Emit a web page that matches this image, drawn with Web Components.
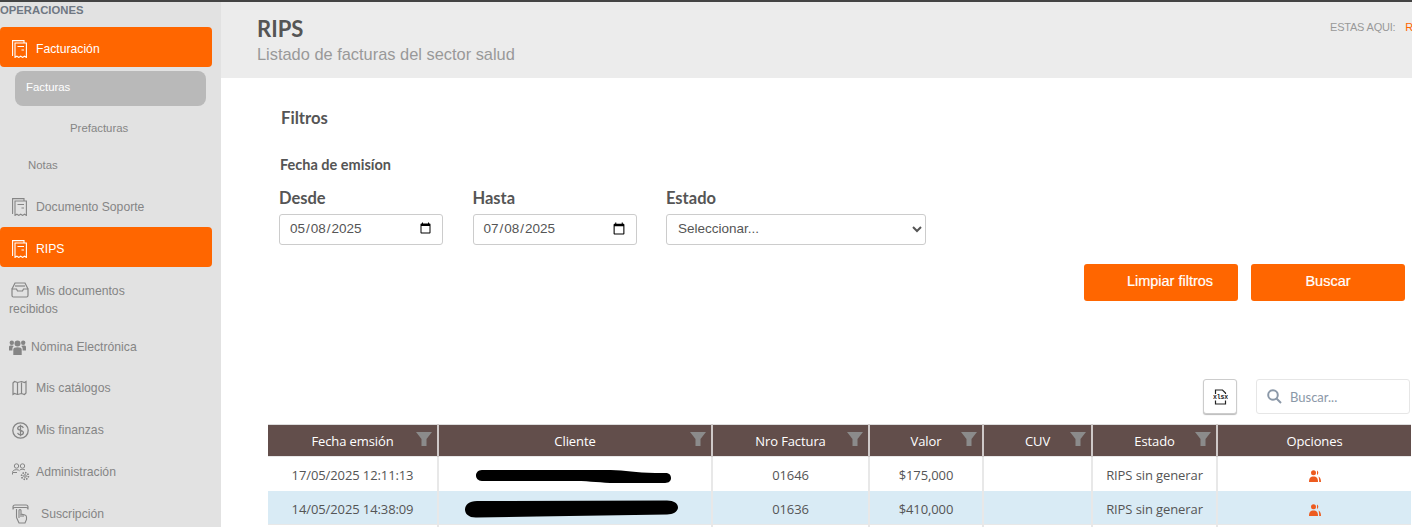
<!DOCTYPE html>
<html lang="es">
<head>
<meta charset="utf-8">
<title>RIPS</title>
<style>
  html, body { margin: 0; height: 100%; overflow: hidden; background: #fff; }
  body { font-family: "Liberation Sans", Arial, sans-serif; }
  app-shell { height: 527px; }
</style>
</head>
<body>
<app-shell>
  <side-nav slot="side"></side-nav>
  <page-header slot="main" title="RIPS" subtitle="Listado de facturas del sector salud"></page-header>
  <filter-panel slot="main"></filter-panel>
  <invoice-table slot="main"></invoice-table>
</app-shell>

<script>
const icons = {
  receipt: `<svg width="15" height="18" viewBox="0 0 15 18" fill="none" stroke="currentColor" stroke-width="1.100"><path d="M1 15.500H.6V.6h11.400V3"/><path d="M3 3h11.400v14.400l-1.900-1.200-1.900 1.200-1.900-1.200-1.900 1.200-1.900-1.200L3 17.400z"/><path d="M5.500 6.500h6.500M9.500 10h2.500"/></svg>`,
  inbox: `<svg width="18" height="16" viewBox="0 0 18 16" fill="none" stroke="currentColor" stroke-width="1.200"><path d="M1 7l3-6h10l3 6"/><path d="M4 4h10"/><path d="M1 7h4.500l1 2h5l1-2H17v6.500a1.500 1.500 0 0 1-1.500 1.500h-13A1.500 1.500 0 0 1 1 13.500z"/></svg>`,
  users: `<svg width="17" height="15" viewBox="0 0 17 15" fill="currentColor"><circle cx="8.500" cy="3.600" r="3"/><circle cx="2.800" cy="2.800" r="2.200"/><circle cx="14.200" cy="2.800" r="2.200"/><path d="M4.300 9.500c0-1.500 1.400-2.300 4.200-2.300s4.200.8 4.200 2.300V15H4.300z"/><path d="M0 6.800C0 5.800 1 5.400 2.800 5.400c1 0 1.700.2 2.100.6-1 .6-1.500 1.500-1.500 3v1.600H0zM17 6.800c0-1-1-1.400-2.800-1.400-1 0-1.700.2-2.100.6 1 .6 1.500 1.500 1.500 3v1.600H17z"/></svg>`,
  map: `<svg width="15" height="16" viewBox="0 0 15 16" fill="none" stroke="currentColor" stroke-width="1.200"><path d="M1 3l1.500-1.500 3 1 4-1 3 1L14 1.500V13l-1.500 1.500-3-1-4 1-3-1L1 14.500z"/><path d="M5.500 2.500v12M9.500 2.500v11"/></svg>`,
  dollar: `<svg width="17" height="17" viewBox="0 0 17 17" fill="none" stroke="currentColor" stroke-width="1.300"><circle cx="8.500" cy="8.500" r="7.700"/><path d="M11.300 6c-.3-1.200-1.400-1.800-2.800-1.800-1.600 0-2.800.8-2.800 2.100 0 2.800 5.700 1.500 5.700 4.300 0 1.300-1.200 2.200-2.900 2.200-1.500 0-2.600-.7-2.900-1.900M8.500 2.800v11.400"/></svg>`,
  admin: `<svg width="18" height="18" viewBox="0 0 18 18" fill="none" stroke="currentColor" stroke-width="1"><circle cx="4.500" cy="3" r="2.200"/><circle cx="10.500" cy="3" r="2.200"/><path d="M.5 11.500V9.500c0-1.800 1.500-2.800 4-2.800 1.500 0 2.500.4 3.100 1.100M1 9.500h4M8 6.800c.7-.3 1.500-.4 2.500-.4 1 0 1.800.1 2.500.5"/><circle cx="13" cy="13" r="1.300"/><circle cx="13" cy="13" r="3.400" stroke-width="1.700" stroke-dasharray="1.500 1.100"/></svg>`,
  hand: `<svg width="17" height="20" viewBox="0 0 17 20" fill="none" stroke="currentColor" stroke-width="1.100"><path d="M1 5.500V3c0-1.500 1-2 2-2h11c1 0 2 .5 2 2v2.500c0-1.500-1-2-2-2H3c-1 0-2 .5-2 2z"/><path d="M4.500 5v8.500M7 14V6.500a1 1 0 0 1 2 0V10l4 1c1 .3 1.500 1 1.500 2v2.500L13 19H7l-2.500-5.500"/><path d="M11 10.500V13M9 10v3"/></svg>`
};

class AppShell extends HTMLElement {
  connectedCallback() {
    this.attachShadow({ mode: 'open' });
    this.shadowRoot.innerHTML = `
      <style>
        :host { display: grid; grid-template-columns: 221px 1fr; border-top: 2px solid #444; box-sizing: border-box; overflow: hidden; }
        .side { background: #e2e2e2; min-height: 0; overflow: hidden; }
        .main { min-width: 0; overflow: hidden; }
      </style>
      <div class="side"><slot name="side"></slot></div>
      <div class="main"><slot name="main"></slot></div>
    `;
  }
}

class NavItem extends HTMLElement {
  connectedCallback() {
    this.attachShadow({ mode: 'open' });
    const icon = this.getAttribute('icon');
    this.shadowRoot.innerHTML = `
      <style>
        :host { display: flex; align-items: center; box-sizing: border-box; width: 212px; height: 40px; padding-left: var(--left, 12px);
          color: #858585; font-size: 12.200px; border-radius: 4px; }
        :host([active]) { background: #ff6600; color: #fff; padding-top: 3px; }
        .ico { display: flex; width: var(--ico, 24px); flex: none; }
      </style>
      ${icon ? `<span class="ico">${icons[icon]}</span>` : ''}
      <span><slot></slot></span>
    `;
  }
}

class SideNav extends HTMLElement {
  connectedCallback() {
    this.attachShadow({ mode: 'open' });
    this.shadowRoot.innerHTML = `
      <style>
        :host { display: block; }
        .title { height: 25px; line-height: 17px; font-size: 11.300px; font-weight: 700; color: #6f7782; }
        .sub { display: block; height: 35px; line-height: 32px; font-size: 11.400px; color: #858585; }
        .pill { margin: 4px 15px 0; width: 191px; background: #b9b9b9; color: #fff; border-radius: 8px; padding-left: 11px; box-sizing: border-box; }
        .pre { margin-top: 6px; padding-left: 70px; }
        .notas { margin-top: 2px; padding-left: 28px; }
        .two { padding-left: 11px; margin-top: 15px; line-height: 18px; font-size: 12.200px; color: #858585; }
        .two svg { vertical-align: -3px; margin-right: 7px; }
        .two span { margin-left: -2px; }
        .doc { margin-top: 3px; }
        .nom { margin-top: 9px; --left: 9px; --ico: 22px; }
        .cat { margin-top: 1px; }
        .fin { margin-top: 2px; }
        .adm { margin-top: 2px; }
        .sus { margin-top: 2px; --ico: 29px; }
      </style>
      <div class="title">OPERACIONES</div>
      <nav-item active icon="receipt">Facturación</nav-item>
      <div class="sub pill">Facturas</div>
      <div class="sub pre">Prefacturas</div>
      <div class="sub notas">Notas</div>
      <nav-item class="doc" icon="receipt">Documento Soporte</nav-item>
      <nav-item active icon="receipt">RIPS</nav-item>
      <div class="two">${icons.inbox}Mis documentos<br><span>recibidos</span></div>
      <nav-item class="nom" icon="users">Nómina Electrónica</nav-item>
      <nav-item class="cat" icon="map">Mis catálogos</nav-item>
      <nav-item class="fin" icon="dollar">Mis finanzas</nav-item>
      <nav-item class="adm" icon="admin">Administración</nav-item>
      <nav-item class="sus" icon="hand">Suscripción</nav-item>
    `;
  }
}

class PageHeader extends HTMLElement {
  connectedCallback() {
    this.attachShadow({ mode: 'open' });
    this.shadowRoot.innerHTML = `
      <style>
        :host { display: flex; justify-content: space-between; box-sizing: border-box; height: 76px; background: #ececec; padding: 13px 0 0 36px; overflow: hidden; }
        h1 { margin: 0; font: 700 22px/27px Lato, sans-serif; color: #555; }
        p { margin: 0; font-size: 16.400px; line-height: 24px; color: #999; }
        .crumb { white-space: nowrap; font-size: 11px; letter-spacing: -.2px; color: #999; margin: 6px -4px 0 0; width: 86px; overflow: hidden; }
        .crumb b { font-weight: 400; color: #ff6600; margin-left: 7px; }
      </style>
      <div><h1>${this.getAttribute('title')}</h1><p>${this.getAttribute('subtitle')}</p></div>
      <div class="crumb">ESTAS AQUI: <b>RIPS</b></div>
    `;
  }
}

class DateField extends HTMLElement {
  connectedCallback() {
    this.attachShadow({ mode: 'open' });
    this.shadowRoot.innerHTML = `
      <style>
        :host { display: block; }
        label { display: block; font: 700 16.500px/20px Lato, sans-serif; color: #555; margin-bottom: 6px; }
        input, select { display: block; box-sizing: border-box; height: 31px; width: var(--w, 164px); border: 1px solid #ccc; border-radius: 3px;
          background: #fff; font: 13.500px "Liberation Sans", Arial, sans-serif; color: #555; padding: 0 8px 2px 9px; }
        select { padding: 0 7px 3px; }
      </style>
      <label>${this.getAttribute('label')}</label>
      ${this.hasAttribute('select')
        ? `<select><option>Seleccionar...</option></select>`
        : `<input type="date" value="${this.getAttribute('value')}">`}
    `;
  }
}

class FilterPanel extends HTMLElement {
  connectedCallback() {
    this.attachShadow({ mode: 'open' });
    this.shadowRoot.innerHTML = `
      <style>
        :host { display: block; box-sizing: border-box; height: 301px; padding: 30px 0 0 58px; }
        h2 { margin: 0 0 0 2px; font: 700 16.700px/20px Lato, sans-serif; color: #555; }
        h3 { margin: 27px 0 13px 1px; font: 700 14.500px/20px Lato, sans-serif; color: #555; }
        .row { display: flex; gap: 29.500px; }
        .actions { display: flex; justify-content: flex-end; gap: 13px; margin: 19px 7px 0 0; }
        button { width: 154px; height: 37px; border: 0; border-radius: 3px; background: #ff6600; color: #fff; padding: 0 0 3px;
          font: 14.500px "Liberation Sans", Arial, sans-serif; -webkit-text-stroke: .2px #fff; }
        .shift { padding-left: 18px; }
        date-field:last-child { --w: 260px; }
      </style>
      <h2>Filtros</h2>
      <h3>Fecha de emisíon</h3>
      <div class="row">
        <date-field label="Desde" value="2025-05-08"></date-field>
        <date-field label="Hasta" value="2025-07-08"></date-field>
        <date-field label="Estado" select></date-field>
      </div>
      <div class="actions">
        <button class="shift">Limpiar filtros</button>
        <button>Buscar</button>
      </div>
    `;
  }
}

class InvoiceTable extends HTMLElement {
  connectedCallback() {
    this.attachShadow({ mode: 'open' });
    const funnel = `<svg class="funnel" width="16" height="14" viewBox="0 0 16 14"><path fill="#8b8b8b" d="M0 0h16L10.500 7v7h-5V7z"/></svg>`;
    const heads = ['Fecha emsión', 'Cliente', 'Nro Factura', 'Valor', 'CUV', 'Estado', 'Opciones'];
    const people = `<svg width="12" height="12" viewBox="0 0 12 12" fill="#ed5b1f"><circle cx="4.500" cy="2.800" r="2.500"/><path d="M0 12c0-4 1.500-5.500 4.500-5.500S9 8 9 12z"/><path d="M8 .6a2.500 2.500 0 0 1 0 4.400zM9.500 6.500c1.600.8 2.500 2.500 2.500 5.500h-1.800c0-2.500-.2-4-.7-5.500z"/></svg>`;
    const redact1 = `<svg class="red" width="195" height="16" viewBox="0 0 197 16" style="margin-left:-4px"><path d="M6 2h130c15 0 25 3 45 3h10c4 0 6 2 6 5s-2 5-6 5h-50c-15 0-25-2-40-2H6c-4 0-6-3-6-5.500S2 2 6 2z"/></svg>`;
    const redact2 = `<svg class="red" width="213" height="19" viewBox="0 0 213 19" style="margin-left:-7px"><path d="M12 1l190-.5c7 0 11 3 11 7s-5 7-11 7l-130 2-60 1H12C4 18 0 14 0 9.500S4 1 12 1z"/></svg>`;
    const rows = [
      ['17/05/2025 12:11:13', redact1, '01646', '$175,000', '', 'RIPS sin generar', people],
      ['14/05/2025 14:38:09', redact2, '01636', '$410,000', '', 'RIPS sin generar', people]
    ];
    this.shadowRoot.innerHTML = `
      <style>
        :host { display: block; padding: 0 2px 0 47px; font: 13px "Open Sans", sans-serif; letter-spacing: -.1px; color: #555; }
        .tools { display: flex; justify-content: flex-end; gap: 19px; height: 35px; margin-bottom: 10px; }
        .xlsx { width: 34px; height: 35px; box-sizing: border-box; border: 1px solid #ccc; border-radius: 3px; box-shadow: 0 1px 1px #bbb; display: flex; align-items: center; justify-content: center; background: #fff; }
        .search { width: 154px; height: 35px; box-sizing: border-box; border: 1px solid #e6e6e6; border-radius: 3px; display: flex; align-items: center; gap: 8px; padding-left: 10px; font: 13px Lato, sans-serif; color: #8b98a8; letter-spacing: 0; }
        table { border-collapse: collapse; table-layout: fixed; width: 1143px; }
        th { height: 31px; padding: 0; background: #624e4b; color: #fff; font-weight: 400; border: 0 solid #cfc9c8; border-right-width: 2px; position: relative; border-top: 1px solid #ddd; }
        th:last-child { border-right: 0; }
        .funnel { position: absolute; right: 5px; top: 7px; }
        td { height: 33px; padding: 1px 0 0; text-align: center; border-right: 2px solid #e8e8e8; border-top: 1px solid #e8e8e8; }
        td:last-child { border-right: 0; }
        tr.alt td { height: 31px; background: #d9ebf5; border-top-color: #d9ebf5; }
        td svg { display: inline-block; vertical-align: middle; }
        .red { fill: #000; }
      </style>
      <div class="tools">
        <div class="xlsx">
          <svg width="15" height="16" viewBox="0 0 15 16" fill="none" stroke="#222" stroke-width="1.200">
            <path d="M2.500 5V1h7L12.500 4v1M2.500 11.500V15h10v-3.500"/>
            <text x="7.500" y="10" text-anchor="middle" font-family="Liberation Mono" font-size="6.500" font-weight="700" fill="#222" stroke="none">xlsx</text>
          </svg>
        </div>
        <div class="search">
          <svg width="15" height="15" viewBox="0 0 15 15" fill="none" stroke="#8b98a8" stroke-width="2"><circle cx="6" cy="6" r="4.800"/><path d="M9.500 9.500l4.500 4.500"/></svg>
          Buscar...
        </div>
      </div>
      <table>
        <colgroup><col style="width:170px"><col style="width:274px"><col style="width:157px"><col style="width:114px"><col style="width:109px"><col style="width:125px"><col style="width:194px"></colgroup>
        <thead><tr>${heads.map((h, i) => `<th>${h}${i < 6 ? funnel : ''}</th>`).join('')}</tr></thead>
        <tbody>${rows.map((r, i) => `<tr class="${i ? 'alt' : ''}">${r.map(c => `<td>${c}</td>`).join('')}</tr>`).join('')}
          <tr><td></td><td></td><td></td><td></td><td></td><td></td><td></td></tr>
        </tbody>
      </table>
    `;
  }
}

customElements.define('nav-item', NavItem);
customElements.define('side-nav', SideNav);
customElements.define('page-header', PageHeader);
customElements.define('date-field', DateField);
customElements.define('filter-panel', FilterPanel);
customElements.define('invoice-table', InvoiceTable);
customElements.define('app-shell', AppShell);
</script>
</body>
</html>
